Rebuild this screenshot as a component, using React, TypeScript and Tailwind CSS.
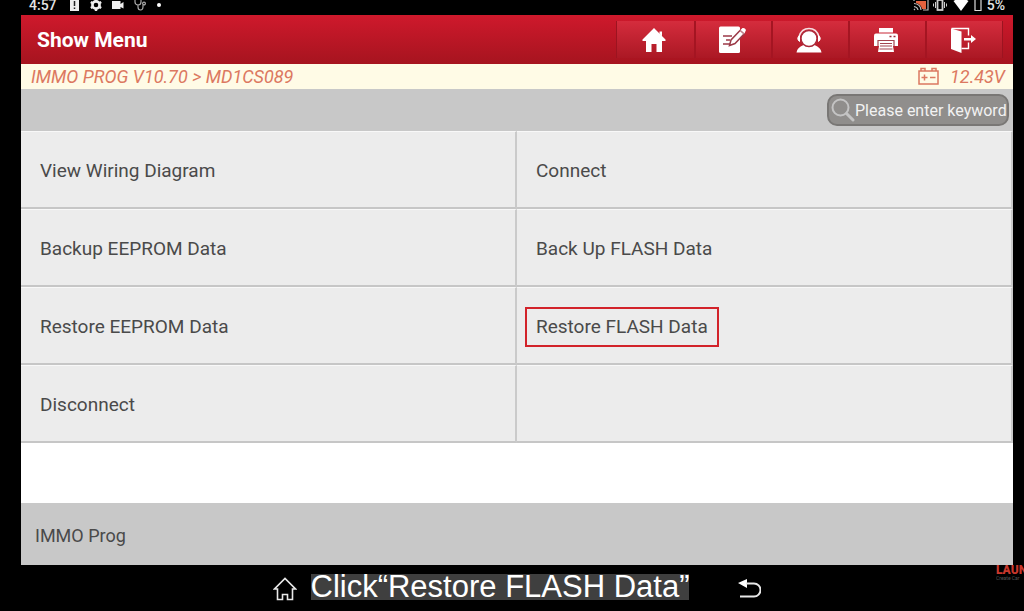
import type { ReactNode } from "react";
import clsx from "clsx";

interface MenuItem {
  label: string;
  highlighted?: boolean;
}

const menuItems: MenuItem[] = [
  { label: "View Wiring Diagram" },
  { label: "Connect" },
  { label: "Backup EEPROM Data" },
  { label: "Back Up FLASH Data" },
  { label: "Restore EEPROM Data" },
  { label: "Restore FLASH Data", highlighted: true },
  { label: "Disconnect" },
];

function HomeIcon() {
  return (
    <svg className="h-7 w-7" viewBox="0 0 28 28" fill="#fff">
      <path d="M14 2 25.5 13.5V15H22V26H16.5V18H11.5V26H6V15H2.5V13.5Z" />
      <path d="M19.5 5.5H22V10.5L19.5 8Z" />
    </svg>
  );
}

function EditIcon() {
  return (
    <svg className="h-7 w-7" viewBox="0 0 28 28">
      <rect x="1" y="0.5" width="21" height="26.5" rx="1.5" fill="#fff" />
      <path d="M5 10H14M8 14H12M5 18H12" stroke="#9c3a48" strokeWidth="1.6" />
      <path
        d="M11.5 19.5 13 14 22.5 4 26.5 7.5 17 17.5Z"
        fill="#fff"
        stroke="#9c3a48"
        strokeWidth="1.5"
      />
      <path d="M22.5 4 24.5 2Q27 1.5 28 4L26.5 7.5Z" fill="#fff" />
      <path d="M22 4.5 26 8" stroke="#c2808a" strokeWidth="1.2" />
    </svg>
  );
}

function SupportIcon() {
  return (
    <svg className="h-7 w-7" viewBox="0 0 28 28">
      <path
        d="M1.5 26.5Q2 21.5 8.5 19H19.5Q26 21.5 26.5 26.5Z"
        fill="#fff"
      />
      <circle cx="14" cy="12.5" r="8" fill="#fff" stroke="#ab2a3a" strokeWidth="1.4" />
      <path
        d="M4 10.5Q6.5 2.5 14 2.5T24 10.5"
        fill="none"
        stroke="#f6dfe2"
        strokeWidth="1.4"
      />
      <path
        d="M4.5 9.5Q1 12.5 4.5 15.5ZM23.5 9.5Q27 12.5 23.5 15.5Z"
        fill="#fff"
        stroke="#fff"
      />
    </svg>
  );
}

function PrinterIcon() {
  return (
    <svg className="h-7 w-7" viewBox="0 0 28 28">
      <rect x="7" y="2" width="14" height="4.5" fill="#fff" />
      <path d="M4 7.5H24Q26 7.5 26 9.5V20H2V9.5Q2 7.5 4 7.5Z" fill="#fff" />
      <path d="M6 14.5H22V20H21L22 26H6L7 20H6Z" fill="#fff" />
      <path
        d="M6 20V14.5H22V20M8 17.5H20M8 20H20M7.5 23H20.5"
        fill="none"
        stroke="#a34550"
        strokeWidth="1.2"
      />
      <path d="M17.5 10.5H19.5M21.5 10.5H23.5" stroke="#9c2a38" strokeWidth="1.5" />
    </svg>
  );
}

function ExitIcon() {
  return (
    <svg className="h-7 w-7" viewBox="0 0 28 28">
      <path d="M2 2.5 12.5 5.5V27L2 23Z" fill="#fff" />
      <path
        d="M2.5 2.5H19.5V9.5M19.5 16.5V22.5H12.5"
        fill="none"
        stroke="#fff"
        strokeWidth="1.4"
      />
      <path d="M15 12H22V9L27 13 22 17V14.5H15Z" fill="#fff" />
    </svg>
  );
}

const toolbar: { label: string; icon: ReactNode }[] = [
  { label: "Home", icon: <HomeIcon /> },
  { label: "Feedback", icon: <EditIcon /> },
  { label: "Support", icon: <SupportIcon /> },
  { label: "Print", icon: <PrinterIcon /> },
  { label: "Exit", icon: <ExitIcon /> },
];

function StatusBar() {
  return (
    <div className="flex h-[15px] items-center justify-between overflow-hidden pr-2 pb-1.5 pl-2 text-sm font-medium text-[#e4e4e4]">
      <div className="flex items-center gap-2">
        <span className="mr-1">4:57</span>
        <svg className="h-3.5 w-3" viewBox="0 0 12 14">
          <rect x="1" y="0" width="9" height="13" fill="#eee" />
          <path d="M5.5 3V8M5.5 9.5V11" stroke="#222" strokeWidth="1.5" />
        </svg>
        <svg className="h-3.5 w-3.5" viewBox="0 0 14 14">
          <circle cx="7" cy="7" r="3.6" fill="none" stroke="#eee" strokeWidth="2.6" />
          <path
            d="M7 1V3M7 11V13M1.8 4 3.5 5M10.5 9 12.2 10M1.8 10 3.5 9M10.5 5 12.2 4"
            stroke="#eee"
            strokeWidth="2.4"
          />
        </svg>
        <svg className="h-3.5 w-3.5" viewBox="0 0 14 14" fill="#eee">
          <path d="M1 3H9.5V6L12.5 4V10.5L9.5 9V11H1Z" />
        </svg>
        <svg
          className="h-3.5 w-3.5"
          viewBox="0 0 14 14"
          fill="none"
          stroke="#aaa"
          strokeWidth="1.2"
        >
          <path d="M2 1V4A3 3 0 0 0 8 4V1M5 7V9Q5 12 7.5 12T10 8.5V7" />
          <circle cx="11" cy="5.5" r="1.4" />
        </svg>
        <span className="ml-0.5 h-1 w-1 rounded-full bg-white" />
      </div>
      <div className="flex items-center gap-1">
        <svg className="h-3.5 w-4" viewBox="0 0 16 14">
          <path d="M1 3V1H15V12H10" fill="none" stroke="#bbb" strokeWidth="1.2" />
          <path d="M3 3H13V11H9Q8 6 3 5Z" fill="#e4623e" />
          <path
            d="M1 5.5Q7.5 6 8 12M1 8.5Q4.5 9 5 12M1 11 2 12"
            fill="none"
            stroke="#bbb"
            strokeWidth="1.2"
          />
        </svg>
        <svg className="h-3.5 w-3.5" viewBox="0 0 14 14" fill="none" stroke="#ccc">
          <rect x="4.5" y="2" width="5" height="10" strokeWidth="1.8" />
          <path d="M2.5 4V10M.5 5.5V8.5M11.5 4V10M13.5 5.5V8.5" />
        </svg>
        <svg className="ml-0.5 h-3.5 w-4" viewBox="0 0 16 14" fill="#fff">
          <path d="M8 13 .5 3Q8-2 15.5 3Z" />
        </svg>
        <svg className="h-3.5 w-2.5" viewBox="0 0 10 14" fill="none" stroke="#ddd">
          <path d="M2 1.5H8V12.5H2Z" strokeWidth="1.2" />
        </svg>
        <span>5%</span>
      </div>
    </div>
  );
}

export default function App() {
  return (
    <div className="relative flex min-h-screen flex-col overflow-hidden bg-black pr-[11px] pl-[21px] font-[Roboto,sans-serif] text-[#4a4a4a]">
      <StatusBar />

      {/* Title bar */}
      <header className="flex h-[49px] items-center justify-between bg-gradient-to-b from-[#cf192c] to-[#a6141f] pr-2.5 pl-4">
        <h1 className="pt-0.5 text-[21px] font-bold text-white">Show Menu</h1>
        <nav className="flex h-[37px] border-x border-[#9c1420]">
          {toolbar.map((item, i) => (
            <button
              key={item.label}
              aria-label={item.label}
              className={clsx(
                "flex w-[77px] items-center justify-center bg-gradient-to-b from-[#d52c3d] to-[#ab1824] pr-1",
                i > 0 && "border-l-2 border-[#a41522]"
              )}
            >
              {item.icon}
            </button>
          ))}
        </nav>
      </header>

      {/* Breadcrumb and battery voltage */}
      <div className="flex h-[25px] items-center justify-between bg-[#fffbe6] pr-2 pl-2.5 text-lg text-[#dc7860] italic">
        <span>IMMO PROG V10.70 &gt; MD1CS089</span>
        <span className="flex items-center gap-2.5">
          <svg
            className="h-5 w-[22px]"
            viewBox="0 0 22 20"
            fill="none"
            stroke="#dc7860"
            strokeWidth="1.5"
          >
            <path d="M1 4H20V17H1ZM3 4V1.5H7V4M14 4V1.5H18V4M3.5 10.5H9.5M6.5 7.5V13.5M12 10.5H17.5" />
          </svg>
          12.43V
        </span>
      </div>

      {/* Search */}
      <div className="flex h-[42px] items-center justify-end bg-[#c8c8c8] pr-1">
        <label className="flex h-8 w-[182px] items-center rounded-[10px] border-2 border-[#797775] bg-[#908e8c] pl-0.5">
          <svg
            className="h-6 w-6 shrink-0"
            viewBox="0 0 24 24"
            fill="none"
            stroke="#c4c4c4"
            strokeLinecap="round"
          >
            <circle cx="9.5" cy="9.5" r="8" strokeWidth="2" />
            <path d="M15.5 15.5 22 22" strokeWidth="3" />
          </svg>
          <input
            type="text"
            aria-label="Search"
            placeholder="Please enter keyword"
            className="w-full min-w-0 bg-transparent pt-0.5 text-base text-white outline-none placeholder:text-[#f2f2f2]"
          />
        </label>
      </div>

      <main className="flex-1 bg-white">
        <div className="grid grid-cols-2 bg-[#ececec]">
          {menuItems.map((item) => (
            <button
              key={item.label}
              className="flex h-[78px] items-center border-t border-r-2 border-b-2 border-t-[#f8f8f8] border-r-[#cacaca] border-b-[#c6c6c6] pt-0.5 pl-2 text-left text-[19px]"
            >
              <span
                className={clsx(
                  "flex h-10 items-center border-2 px-[9px] pt-0.5",
                  item.highlighted ? "border-[#d2232a]" : "border-transparent"
                )}
              >
                {item.label}
              </span>
            </button>
          ))}
          <div className="border-t border-r-2 border-b-2 border-t-[#f8f8f8] border-r-[#cacaca] border-b-[#c6c6c6]" />
        </div>
      </main>

      <footer className="flex h-[62px] items-center bg-[#c8c8c8] pt-1 pl-3.5 text-lg">
        IMMO Prog
      </footer>

      {/* System navigation with the caption */}
      <div className="flex h-[46px] items-center justify-center pb-0.5">
        <button aria-label="Home screen" className="mr-3.5 pt-1">
          <svg
            className="h-6 w-6"
            viewBox="0 0 24 24"
            fill="none"
            stroke="#e8e8e8"
            strokeWidth="1.6"
          >
            <path d="M4.5 12H1.5L12 1.5 22.5 12H19.5V22.5H14.5V17.5H9.5V22.5H4.5Z" />
          </svg>
        </button>
        <p className="bg-[#3f3f3f] font-['Liberation_Sans',Arial,sans-serif] text-[31px] leading-[26px] whitespace-nowrap text-white">
          Click“Restore FLASH Data”
        </p>
        <button aria-label="Back" className="ml-12 pt-1">
          <svg className="h-6 w-6" viewBox="0 0 24 24">
            <path d="M1 6 10 2V11Z" fill="#fff" />
            <path
              d="M9 6.5H17A6.5 6.5 0 0 1 17 19.5H3"
              fill="none"
              stroke="#e8e8e8"
              strokeWidth="2"
            />
          </svg>
        </button>
      </div>

      {/* Brand mark running off the right edge */}
      <div className="absolute right-0 bottom-[30px] w-7 overflow-hidden whitespace-nowrap">
        <div className="text-xs leading-3 font-black text-[#c8372c]">LAUNCH</div>
        <div className="text-[5px] leading-[5px] text-[#555]">Create Car</div>
      </div>
    </div>
  );
}
